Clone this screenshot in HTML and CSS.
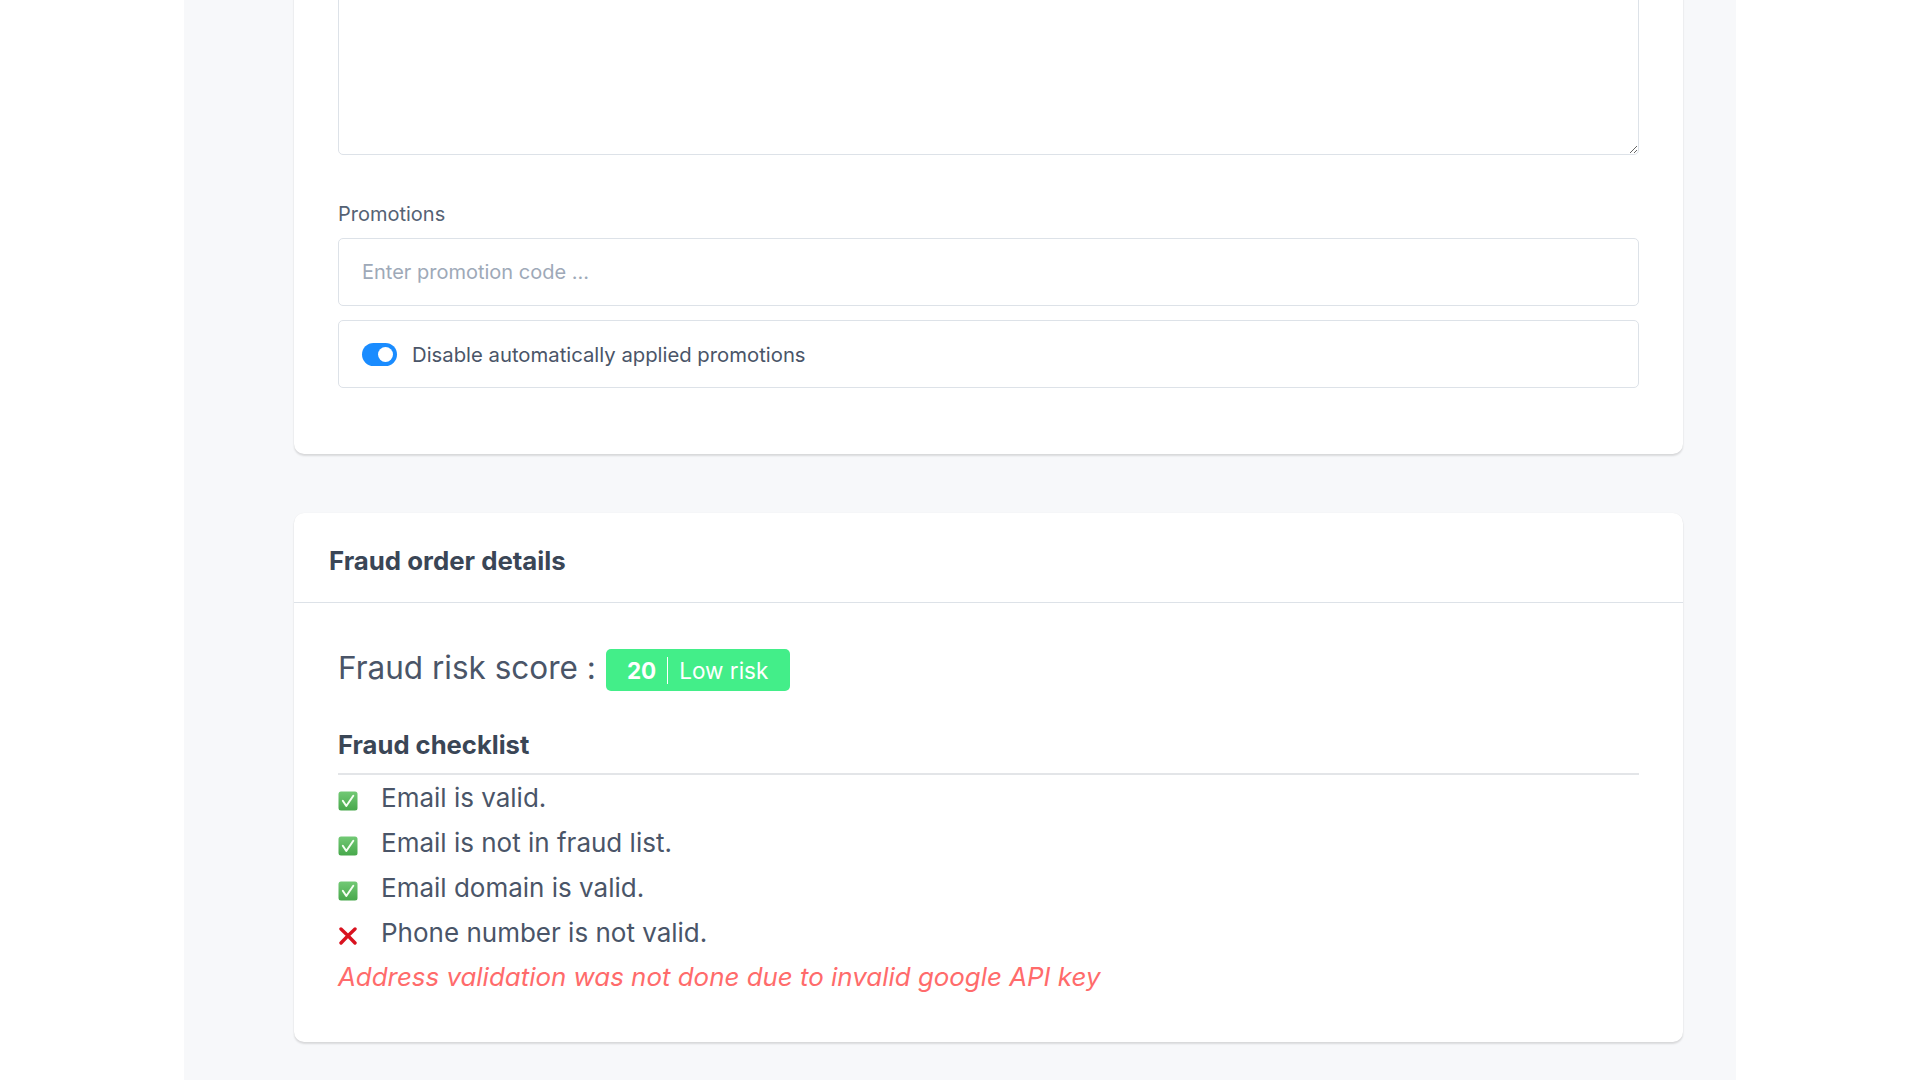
FILE: index.html
```html
<!DOCTYPE html>
<html lang="en">
<head>
    <meta charset="UTF-8">
    <meta name="viewport" content="width=device-width, initial-scale=1.0">
    <title>Order details</title>
    <link rel="stylesheet" href="styles.css">
</head>
<body>
    <div class="page">
        <div class="card card-first">
            <div class="card-body card-body-form">
                <textarea class="notes"></textarea>
                <div class="form-group">
                    <label for="promo">Promotions</label>
                    <input type="text" id="promo" placeholder="Enter promotion code ...">
                    <div class="switch-box">
                        <span class="switch"><span class="knob"></span></span>
                        <span>Disable automatically applied promotions</span>
                    </div>
                </div>
            </div>
        </div>

        <div class="card">
            <div class="card-header">Fraud order details</div>
            <div class="card-body">
                <div class="score">
                    <span class="score-label">Fraud risk score :</span>
                    <span class="badge"><b>20</b><span class="badge-text">Low risk</span></span>
                </div>
                <h5 class="checklist-title">Fraud checklist</h5>
                <ul class="checklist">
                    <li>
                        <svg class="icon icon-ok" viewBox="0 0 20 20" width="20" height="20">
                            <defs>
                                <linearGradient id="g" x1="0" y1="0" x2="0" y2="1">
                                    <stop offset="0" stop-color="#72c975"/>
                                    <stop offset="1" stop-color="#47a84b"/>
                                </linearGradient>
                            </defs>
                            <rect x="0.5" y="0.5" width="19" height="19" rx="2.5" fill="url(#g)"/>
                            <path d="M4.8 9.8 L8.3 15 L15.3 4.8" fill="none" stroke="#f4fff2" stroke-width="2" stroke-linecap="round" stroke-linejoin="round"/>
                        </svg>
                        Email is valid.
                    </li>
                    <li>
                        <svg class="icon icon-ok" viewBox="0 0 20 20" width="20" height="20">
                            <rect x="0.5" y="0.5" width="19" height="19" rx="2.5" fill="url(#g)"/>
                            <path d="M4.8 9.8 L8.3 15 L15.3 4.8" fill="none" stroke="#f4fff2" stroke-width="2" stroke-linecap="round" stroke-linejoin="round"/>
                        </svg>
                        Email is not in fraud list.
                    </li>
                    <li>
                        <svg class="icon icon-ok" viewBox="0 0 20 20" width="20" height="20">
                            <rect x="0.5" y="0.5" width="19" height="19" rx="2.5" fill="url(#g)"/>
                            <path d="M4.8 9.8 L8.3 15 L15.3 4.8" fill="none" stroke="#f4fff2" stroke-width="2" stroke-linecap="round" stroke-linejoin="round"/>
                        </svg>
                        Email domain is valid.
                    </li>
                    <li>
                        <svg class="icon icon-fail" viewBox="0 0 20 18" width="20" height="18">
                            <path d="M3 2 Q10 8.5 17 16 M17 2 Q10 8.5 3 16" fill="none" stroke="#d9121f" stroke-width="3.4" stroke-linecap="round"/>
                        </svg>
                        Phone number is not valid.
                    </li>
                </ul>
                <p class="warning">Address validation was not done due to invalid google API key</p>
            </div>
        </div>
    </div>
</body>
</html>
```

FILE: styles.css
```css
* {
    margin: 0;
    padding: 0;
    box-sizing: border-box;
    font-family: 'Inter', 'Noto Sans', sans-serif;
}

body {
    background: #ffffff;
    overflow: hidden;
}

.page {
    width: 1552px;
    min-height: 100vh;
    margin: 0 auto;
    padding: 0 53px 40px 110px;
    background: #f7f8fa;
}

.card {
    background: #ffffff;
    border-radius: 10px;
    box-shadow: 0 2px 2px rgba(0, 0, 0, 0.12), 0 0 1px rgba(0, 0, 0, 0.08);
    margin-top: 59px;
}

.card-first {
    margin-top: -89px;
}

.card-body {
    padding: 45px 44px 43px;
}

.card-body-form {
    padding: 44px 44px 66px;
}

.notes {
    display: block;
    width: 100%;
    height: 200px;
    border: 1px solid #dde2e8;
    border-radius: 5px;
    resize: vertical;
}

.form-group {
    margin-top: 44px;
}

label {
    display: block;
    margin-bottom: 9px;
    font-size: 20px;
    line-height: 1.5;
    color: #556274;
}

input {
    display: block;
    width: 100%;
    height: 68px;
    padding: 0 23px;
    border: 1px solid #dde2e8;
    border-radius: 5px;
    font-size: 20px;
    color: #4a5568;
}

input::placeholder {
    color: #9ea9b8;
}

.switch-box {
    display: flex;
    align-items: center;
    gap: 15px;
    height: 68px;
    margin-top: 14px;
    padding: 0 23px;
    border: 1px solid #dde2e8;
    border-radius: 5px;
    font-size: 20.3px;
    color: #4a5568;
}

.switch {
    display: flex;
    align-items: center;
    justify-content: flex-end;
    width: 35px;
    height: 23px;
    padding: 0 4px;
    border-radius: 12px;
    background: #1a8cff;
}

.knob {
    width: 15px;
    height: 15px;
    border-radius: 50%;
    background: #ffffff;
}

.card-header {
    padding: 32px 35px 26px;
    border-bottom: 1px solid #dde2e8;
    font-size: 25.8px;
    font-weight: 700;
    color: #3a4656;
}

.score {
    display: flex;
    align-items: baseline;
    gap: 10px;
}

.score-label {
    font-size: 31.5px;
    color: #4a5568;
}

.badge {
    padding: 8px 22px 7px 21px;
    border-radius: 5px;
    background: #43ee89;
    color: #ffffff;
    font-size: 22.5px;
}

.badge-text {
    margin-left: 11px;
    padding-left: 11px;
    border-left: 1.5px solid #ffffff;
}

.checklist-title {
    margin-top: 38px;
    padding-bottom: 13px;
    border-bottom: 2px solid #e3e5e8;
    font-size: 25.6px;
    font-weight: 700;
    color: #3a4656;
}

.checklist {
    list-style: none;
}

.checklist li {
    display: flex;
    align-items: center;
    gap: 23px;
    font-size: 26px;
    line-height: 45px;
    color: #4a5568;
}

.icon {
    flex-shrink: 0;
    margin-top: 7px;
}

.warning {
    font-size: 25.9px;
    line-height: 44px;
    font-style: italic;
    color: #ff6b6b;
}
```
